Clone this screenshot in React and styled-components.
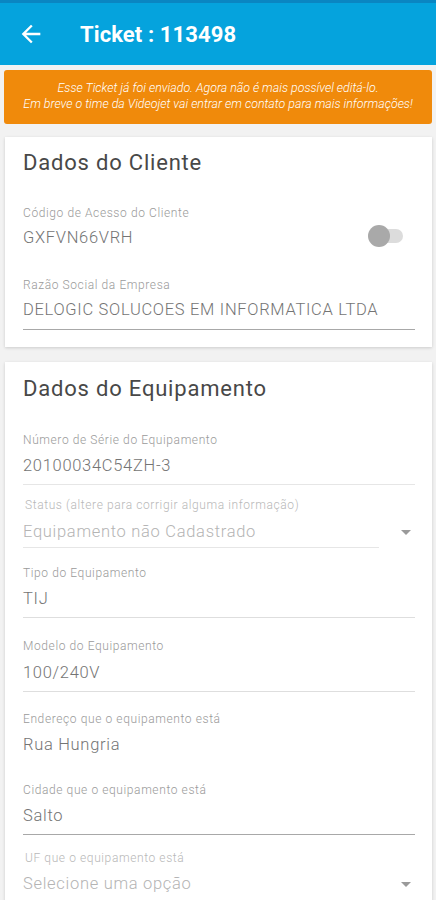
import React from "react";
import styled, { createGlobalStyle } from "styled-components";

const Global = createGlobalStyle`
  html, body { margin: 0; padding: 0; background: #f2f2f2; }
  body { font-family: Roboto, "Noto Sans", "Liberation Sans", sans-serif; -webkit-font-smoothing: antialiased; }
  * { box-sizing: border-box; }
`;

const Page = styled.div`
  width: 436px;
  min-height: 900px;
  background: #f2f2f2;
  overflow: hidden;
`;

const StatusBar = styled.div`
  height: 3px;
  background: #0a86c2;
`;

const AppBar = styled.header`
  height: 62px;
  background: #05a3dd;
  display: flex;
  align-items: center;
  padding-left: 17px;
  color: #fff;
`;

const BackButton = styled.div`
  width: 28px;
  height: 28px;
  display: flex;
  align-items: center;
  justify-content: center;
  margin-right: 35px;
`;

const Title = styled.h1`
  margin: 0;
  font-size: 22px;
  font-weight: 700;
  letter-spacing: 0.1px;
`;

const Banner = styled.div`
  margin: 5px 4px 0;
  height: 54px;
  background: #f08a0b;
  border-radius: 3px;
  color: #fff;
  font-family: Roboto, "Liberation Sans", sans-serif;
  font-style: italic;
  font-weight: 300;
  font-size: 12.4px;
  line-height: 16px;
  text-align: center;
  display: flex;
  flex-direction: column;
  justify-content: center;
  padding-bottom: 2px;
  white-space: nowrap;
`;

const Card = styled.section`
  margin: ${(p) => p.$top}px 4px 0 5px;
  background: #fff;
  box-shadow: 0 1px 3px rgba(0, 0, 0, 0.16);
  padding: ${(p) => p.$padTop}px 17px ${(p) => p.$padBottom}px 18px;
`;

const CardTitle = styled.h2`
  margin: 0 0 ${(p) => p.$gap}px;
  font-size: 22px;
  line-height: 28px;
  font-weight: 400;
  letter-spacing: 0.8px;
  color: #484848;
`;

const Field = styled.div`
  margin-top: ${(p) => p.$top || 0}px;
  padding-bottom: ${(p) => p.$pb ?? 7}px;
  border-bottom: ${(p) =>
    p.$line === "dark"
      ? "1.5px solid #a8a8a8"
      : p.$line === "light"
      ? "1px solid #e6e6e6"
      : p.$line === "mid"
      ? "1.5px solid #dedede"
      : "1px solid transparent"};
`;

const Row = styled.div`
  display: flex;
  align-items: center;
  justify-content: space-between;
`;

const Label = styled.div`
  font-size: 12px;
  line-height: 16px;
  font-weight: 300;
  letter-spacing: 0.6px;
  color: ${(p) => (p.$faint ? "#b8b8b8" : "#9a9a9a")};
  padding-left: ${(p) => (p.$indent ? 2 : 0)}px;
`;

const Value = styled.div`
  margin-top: ${(p) => p.$gap ?? 7}px;
  font-size: 16.5px;
  line-height: 22px;
  font-weight: 300;
  letter-spacing: 0.7px;
  color: ${(p) => (p.$faint ? "#b4b4b4" : "#747474")};
  white-space: nowrap;
`;

const SelectWrap = styled.div`
  margin-top: ${(p) => p.$top}px;
  display: flex;
  align-items: flex-end;
`;

const SelectBody = styled.div`
  flex: 1;
`;

const Caret = styled.div`
  width: 0;
  height: 0;
  border-left: 5px solid transparent;
  border-right: 5px solid transparent;
  border-top: 5px solid #9a9a9a;
  margin: 0 4px ${(p) => p.$bottom}px 22px;
`;

const Toggle = styled.div`
  position: relative;
  width: 34px;
  height: 14px;
  border-radius: 7px;
  background: #dcdcdc;
  margin-right: 12px;
  margin-top: 8px;
`;

const Thumb = styled.div`
  position: absolute;
  left: -1px;
  top: -4px;
  width: 22px;
  height: 22px;
  border-radius: 50%;
  background: #a9a9a9;
`;

function ArrowLeft() {
  return (
    <svg width="28" height="28" viewBox="0 0 24 24" fill="none">
      <path d="M20 11H7.83l5.59-5.59L12 4l-8 8 8 8 1.41-1.41L7.83 13H20v-2z" fill="#fff" />
    </svg>
  );
}

export default function App() {
  return (
    <Page>
      <Global />
      <StatusBar />
      <AppBar>
        <BackButton>
          <ArrowLeft />
        </BackButton>
        <Title>Ticket : 113498</Title>
      </AppBar>
      <Banner>
        <div>Esse Ticket já foi enviado. Agora não é mais possível editá-lo.</div>
        <div>Em breve o time da Videojet vai entrar em contato para mais informações!</div>
      </Banner>

      <Card $top={13} $padTop={12} $padBottom={17}>
        <CardTitle $gap={28}>Dados do Cliente</CardTitle>
        <Row>
          <Field $line="none" $pb={8}>
            <Label>Código de Acesso do Cliente</Label>
            <Value $gap={6}>GXFVN66VRH</Value>
          </Field>
          <Toggle>
            <Thumb />
          </Toggle>
        </Row>
        <Field $top={19} $line="dark" $pb={8}>
          <Label>Razão Social da Empresa</Label>
          <Value $gap={6}>DELOGIC SOLUCOES EM INFORMATICA LTDA</Value>
        </Field>
      </Card>

      <Card $top={15} $padTop={13} $padBottom={20}>
        <CardTitle $gap={29}>Dados do Equipamento</CardTitle>
        <Field $line="light">
          <Label>Número de Série do Equipamento</Label>
          <Value>20100034C54ZH-3</Value>
        </Field>
        <SelectWrap $top={12}>
          <SelectBody>
            <Field $line="light" $pb={4}>
              <Label $faint $indent>Status (altere para corrigir alguma informação)</Label>
              <Value $faint $gap={8}>Equipamento não Cadastrado</Value>
            </Field>
          </SelectBody>
          <Caret $bottom={13} />
        </SelectWrap>
        <Field $top={17} $line="mid">
          <Label>Tipo do Equipamento</Label>
          <Value $gap={7}>TIJ</Value>
        </Field>
        <Field $top={20} $line="mid">
          <Label>Modelo do Equipamento</Label>
          <Value $gap={8}>100/240V</Value>
        </Field>
        <Field $top={19} $line="none">
          <Label>Endereço que o equipamento está</Label>
          <Value $gap={7}>Rua Hungria</Value>
        </Field>
        <Field $top={18} $line="dark">
          <Label>Cidade que o equipamento está</Label>
          <Value $gap={7}>Salto</Value>
        </Field>
        <SelectWrap $top={15}>
          <SelectBody>
            <Field $line="none" $pb={4}>
              <Label $faint $indent>UF que o equipamento está</Label>
              <Value $faint $gap={7}>Selecione uma opção</Value>
            </Field>
          </SelectBody>
          <Caret $bottom={13} />
        </SelectWrap>
      </Card>
    </Page>
  );
}
